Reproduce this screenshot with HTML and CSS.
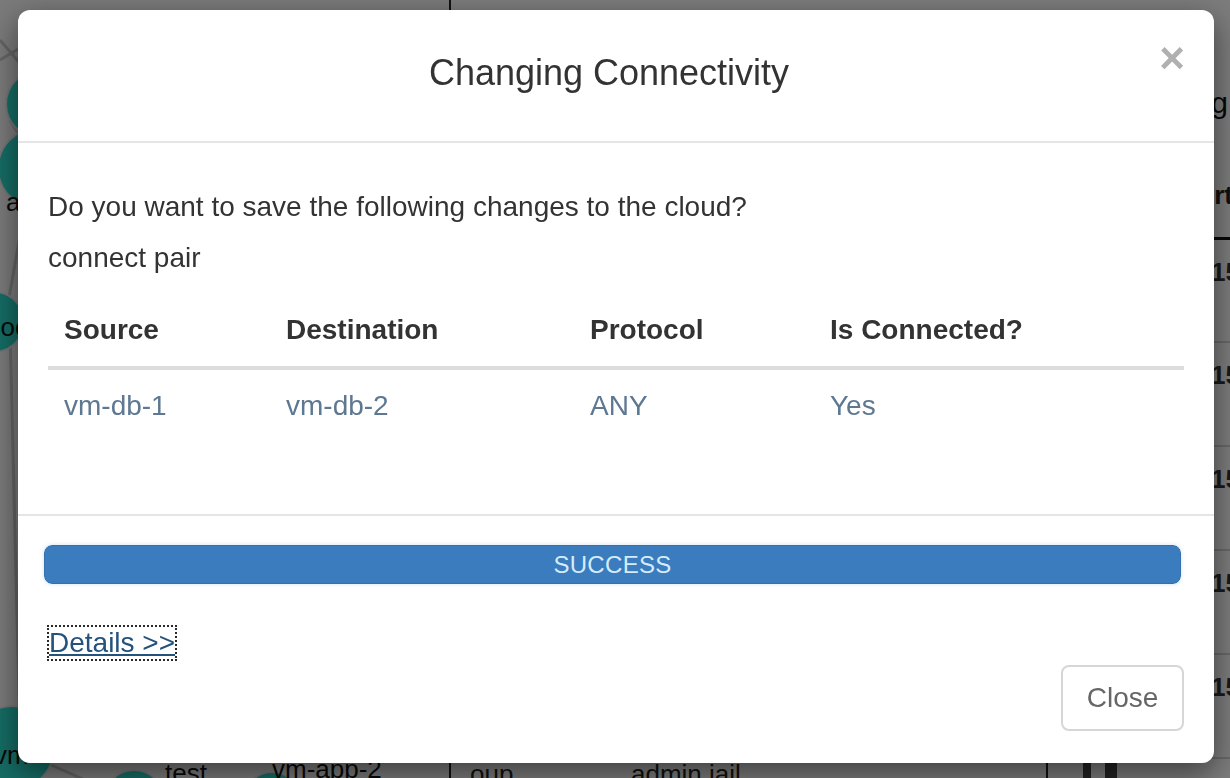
FILE: index.html
```html
<!DOCTYPE html>
<html lang="en">
<head>
<meta charset="utf-8">
<title>Changing Connectivity</title>
<link rel="stylesheet" href="styles.css">
</head>
<body>
<div class="page">
  <div class="graph-pane">
    <svg class="graph" width="449" height="778" viewBox="0 0 449 778">
      <g class="edges">
        <line x1="0" y1="40" x2="60" y2="110"/>
        <line x1="0" y1="60" x2="50" y2="30"/>
        <line x1="10" y1="120" x2="60" y2="200"/>
        <line x1="30" y1="180" x2="5" y2="320"/>
        <line x1="10" y1="330" x2="20" y2="740"/>
        <line x1="40" y1="760" x2="130" y2="800"/>
        <line x1="160" y1="790" x2="250" y2="790"/>
      </g>
      <circle class="node" cx="40" cy="104" r="34"/>
      <circle class="node" cx="38" cy="168" r="40"/>
      <circle class="node" cx="-6" cy="322" r="30"/>
      <circle class="node" cx="12" cy="748" r="42"/>
      <circle class="node" cx="134" cy="800" r="30"/>
      <circle class="node" cx="272" cy="800" r="28"/>
      <text x="6" y="211">app</text>
      <text x="-14" y="336">doc</text>
      <text x="-6" y="764">vm</text>
      <text x="165" y="782">test</text>
      <text x="272" y="778">vm-app-2</text>
    </svg>
  </div>
  <div class="data-pane">
    <div class="pane-head"><span>Logging</span></div>
    <table class="rules">
      <colgroup><col class="r1"><col class="r2"><col class="r3"><col class="r4"></colgroup>
      <thead><tr><th>Name</th><th>Group</th><th></th><th class="port">Port</th></tr></thead>
      <tbody>
        <tr><td>db-rule</td><td>admin</td><td></td><td class="num">1521</td></tr>
        <tr><td>db-rule</td><td>admin</td><td></td><td class="num">1521</td></tr>
        <tr><td>db-rule</td><td>admin</td><td></td><td class="num">1521</td></tr>
        <tr><td>db-rule</td><td>admin</td><td></td><td class="num">1521</td></tr>
        <tr><td>db-rule</td><td>admin</td><td></td><td class="num">1521</td></tr>
        <tr class="last"><td class="grp">oup</td><td class="who">admin,jail</td><td><span class="mini-bar"></span><span class="mini-bar wide"></span></td><td></td></tr>
      </tbody>
    </table>
  </div>
</div>

<div class="backdrop"></div>

<div class="modal" role="dialog">
  <div class="modal-header">
    <h4 class="modal-title">Changing Connectivity</h4>
    <button class="close" type="button" aria-label="Close">×</button>
  </div>
  <div class="modal-body">
    <p class="question">Do you want to save the following changes to the cloud?</p>
    <p class="action">connect pair</p>
    <table class="changes">
      <colgroup><col class="c1"><col class="c2"><col class="c3"><col class="c4"></colgroup>
      <thead>
        <tr><th>Source</th><th>Destination</th><th>Protocol</th><th>Is Connected?</th></tr>
      </thead>
      <tbody>
        <tr><td>vm-db-1</td><td>vm-db-2</td><td>ANY</td><td>Yes</td></tr>
      </tbody>
    </table>
  </div>
  <div class="modal-footer">
    <div class="progress"><div class="progress-bar" style="width:100%">SUCCESS</div></div>
    <a class="details" href="#">Details &gt;&gt;</a>
    <button class="btn-close" type="button">Close</button>
  </div>
</div>
</body>
</html>
```

FILE: styles.css
```css
* { box-sizing: border-box; }

html, body {
  margin: 0;
  padding: 0;
  width: 1230px;
  height: 778px;
  overflow: hidden;
}

body {
  font-family: "Liberation Sans", Arial, Helvetica, sans-serif;
  color: #333;
  background: #f4f4f4;
}

/* ---------- underlying page ---------- */
.page {
  display: flex;
  width: 1230px;
  height: 778px;
  overflow: hidden;
  background: #f4f4f4;
}

.graph-pane {
  width: 449px;
  flex: none;
  overflow: hidden;
}

.graph { display: block; }
.graph .edges line { stroke: #c8c8c8; stroke-width: 3; }
.graph .node { fill: #2ad8c8; stroke: #e8e8e8; stroke-width: 2; }
.graph text { font-family: "Liberation Sans", Arial, sans-serif; font-size: 26px; fill: #111; }

.data-pane {
  flex: 1;
  min-width: 0;
  border-left: 2px solid #222;
  background: #f8f8f8;
  display: flex;
  flex-direction: column;
  overflow: hidden;
}

.pane-head {
  flex: none;
  height: 150px;
  padding: 86px 2px 0 0;
  text-align: right;
  font-size: 30px;
  color: #111;
}

.rules {
  flex: none;
  width: 100%;
  table-layout: fixed;
  border-collapse: collapse;
  font-size: 26px;
  color: #222;
}
.rules col.r1 { width: 164px; }
.rules col.r2 { width: 432px; }
.rules col.r3 { width: 134px; }
.rules col.r4 { width: 49px; }
.rules th {
  height: 88px;
  text-align: left;
  font-weight: bold;
  padding: 30px 0 0 16px;
  vertical-align: top;
  border-bottom: 3px solid #111;
  white-space: nowrap;
}
.rules th.port { padding-left: 0; }
.rules td {
  height: 104px;
  vertical-align: top;
  padding: 17px 0 0 16px;
  border-bottom: 2px solid #d0d0d0;
  font-weight: bold;
  white-space: nowrap;
}
.rules td.num { padding-left: 30px; color: #333; }
.rules tr.last td { padding-top: 0; font-weight: normal; border-bottom: none; }
.rules tr.last td.grp { padding-left: 19px; }
.rules tr.last td.who { border-right: 2px solid #222; }
.mini-bar {
  display: inline-block;
  width: 8px;
  height: 60px;
  margin: 0 0 0 19px;
  background: #444;
}
.mini-bar.wide { width: 12px; margin-left: 14px; }

.backdrop {
  position: fixed;
  inset: 0;
  background: rgba(0, 0, 0, 0.5);
}

/* ---------- modal ---------- */
.modal {
  position: fixed;
  left: 18px;
  top: 10px;
  width: 1196px;
  height: 753px;
  background: #fff;
  border-radius: 12px;
  box-shadow: 0 10px 30px rgba(0, 0, 0, 0.5);
  display: flex;
  flex-direction: column;
  overflow: hidden;
}

.modal-header {
  flex: none;
  height: 133px;
  border-bottom: 2px solid #e5e5e5;
  display: flex;
  align-items: center;
  justify-content: center;
  position: relative;
}

.modal-title {
  margin: 0;
  font-size: 36px;
  font-weight: 400;
  line-height: 1.1;
  color: #333;
  padding: 0 14px 6px 0;
}

.close {
  position: absolute;
  right: 29px;
  top: 26px;
  padding: 0;
  border: 0;
  background: transparent;
  font-family: "Liberation Sans", Arial, sans-serif;
  font-size: 44px;
  font-weight: bold;
  line-height: 1;
  color: #b0b0b0;
  cursor: pointer;
}

.modal-body {
  flex: none;
  height: 371px;
  padding: 44px 30px 0;
}

.modal-body p {
  margin: 0;
  font-size: 28px;
  line-height: 40px;
  color: #333;
}
.modal-body .question { margin-bottom: 11px; }
.modal-body .action { margin-bottom: 16px; }

.changes {
  width: 100%;
  border-collapse: collapse;
  table-layout: fixed;
  font-size: 28px;
}
.changes col.c1 { width: 222px; }
.changes col.c2 { width: 304px; }
.changes col.c3 { width: 240px; }
.changes th {
  text-align: left;
  font-weight: bold;
  color: #333;
  padding: 16px;
  line-height: 40px;
  border-bottom: 4px solid #ddd;
}
.changes td {
  padding: 16px;
  line-height: 40px;
  color: #5e7892;
}

.modal-footer {
  flex: 1;
  border-top: 2px solid #e5e5e5;
  padding: 29px 30px 32px;
  display: flex;
  flex-direction: column;
}

.progress {
  flex: none;
  height: 39px;
  margin: 0 3px 0 -4px;
  border-radius: 8px;
  background: #f5f5f5;
  box-shadow: 0 0 4px rgba(120, 170, 220, 0.35);
  overflow: hidden;
}
.progress-bar {
  height: 100%;
  background: #3a7cbd;
  border: 1px solid #3470ad;
  border-radius: 8px;
  color: #d6ebfa;
  font-size: 24px;
  line-height: 37px;
  text-align: center;
  letter-spacing: 0.3px;
}

.details {
  align-self: flex-start;
  margin-top: 43px;
  margin-left: 1px;
  font-size: 28px;
  line-height: 32px;
  color: #23527c;
  text-decoration: underline;
  outline: 2px dotted #2a2a2a;
  outline-offset: 0;
}

.btn-close {
  margin-top: auto;
  align-self: flex-end;
  width: 123px;
  height: 66px;
  padding: 0;
  border: 2px solid #d6d6d6;
  border-radius: 8px;
  background: #fff;
  font-family: "Liberation Sans", Arial, sans-serif;
  font-size: 28px;
  color: #666;
  cursor: pointer;
}
```
